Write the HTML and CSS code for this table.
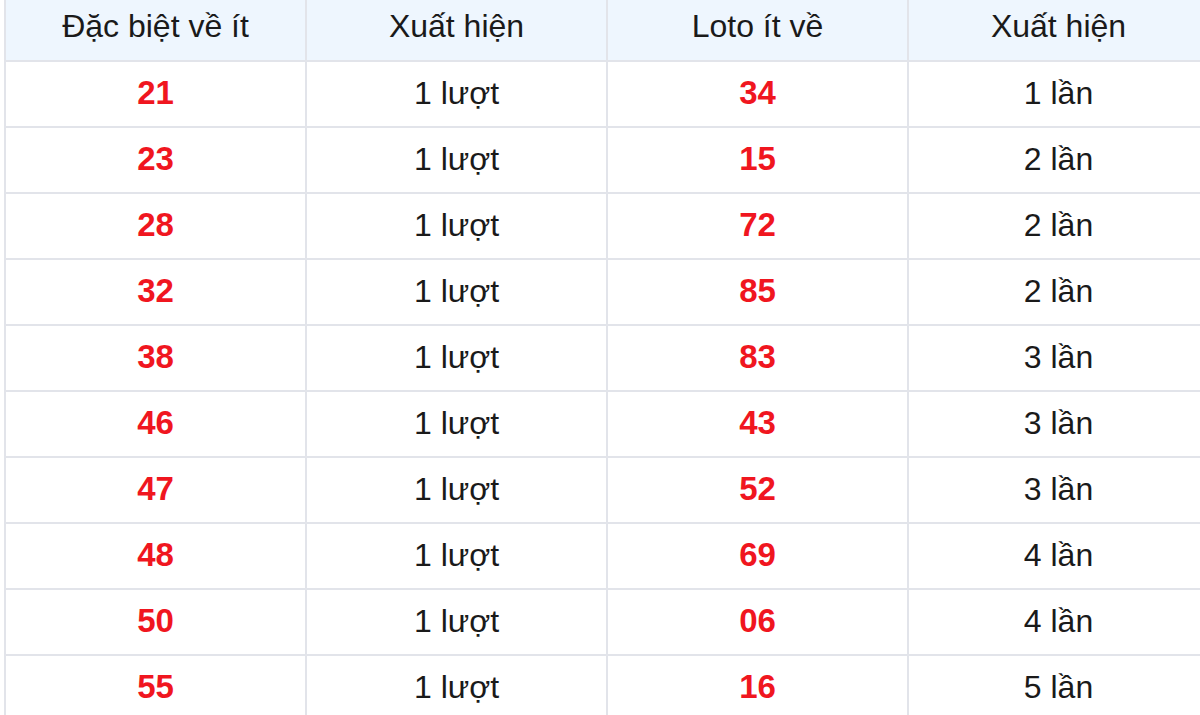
FILE: index.html
```html
<!DOCTYPE html>
<html lang="vi">
<head>
<meta charset="utf-8">
<link rel="stylesheet" href="styles.css">
</head>
<body>
<table class="stats">
  <thead>
    <tr><th>Đặc biệt về ít</th><th>Xuất hiện</th><th>Loto ít về</th><th>Xuất hiện</th></tr>
  </thead>
  <tbody>
    <tr><td class="num">21</td><td>1 lượt</td><td class="num">34</td><td>1 lần</td></tr>
    <tr><td class="num">23</td><td>1 lượt</td><td class="num">15</td><td>2 lần</td></tr>
    <tr><td class="num">28</td><td>1 lượt</td><td class="num">72</td><td>2 lần</td></tr>
    <tr><td class="num">32</td><td>1 lượt</td><td class="num">85</td><td>2 lần</td></tr>
    <tr><td class="num">38</td><td>1 lượt</td><td class="num">83</td><td>3 lần</td></tr>
    <tr><td class="num">46</td><td>1 lượt</td><td class="num">43</td><td>3 lần</td></tr>
    <tr><td class="num">47</td><td>1 lượt</td><td class="num">52</td><td>3 lần</td></tr>
    <tr><td class="num">48</td><td>1 lượt</td><td class="num">69</td><td>4 lần</td></tr>
    <tr><td class="num">50</td><td>1 lượt</td><td class="num">06</td><td>4 lần</td></tr>
    <tr><td class="num">55</td><td>1 lượt</td><td class="num">16</td><td>5 lần</td></tr>
  </tbody>
</table>
</body>
</html>
```
FILE: styles.css
```css
html, body {
  margin: 0;
  padding: 0;
  background: #ffffff;
  overflow: hidden;
}
body {
  font-family: "Liberation Sans", Arial, sans-serif;
  color: #1a1a1a;
}
.stats {
  border-collapse: collapse;
  table-layout: fixed;
  width: 1206px;
  margin-left: 4px;
}
.stats th,
.stats td {
  border: 2px solid #e2e4ea;
  text-align: center;
  font-size: 32px;
  padding: 0;
  width: 301px;
}
.stats th {
  background: #eef6fe;
  font-weight: normal;
  height: 61px;
  vertical-align: top;
  padding-top: 8px;
  box-sizing: border-box;
  border-top: none;
}
.stats td {
  height: 66px;
  padding-bottom: 2px;
  box-sizing: border-box;
}
.stats td.num {
  color: #f0161f;
  font-weight: bold;
  font-size: 33px;
}
```
